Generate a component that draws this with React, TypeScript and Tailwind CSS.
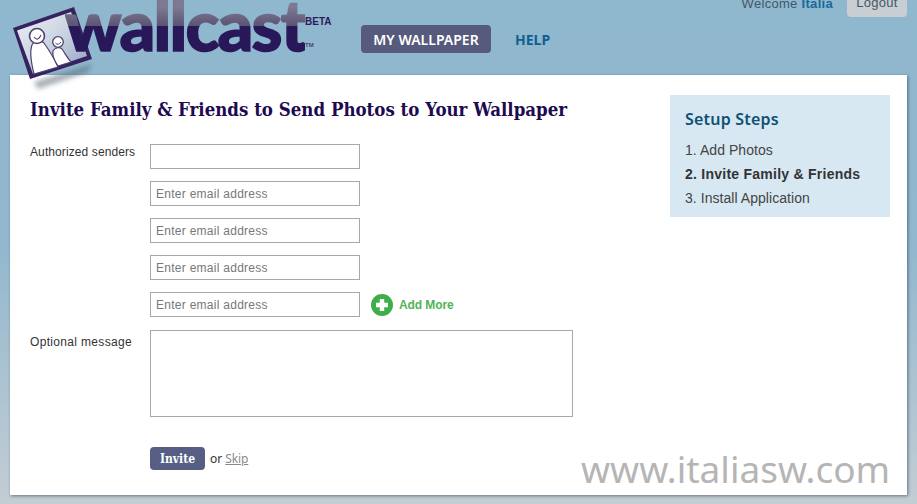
import React from "react";

function LogoFrame() {
  return (
    <svg width="100" height="95" viewBox="0 0 100 95" className="absolute left-0 top-0">
      <defs>
        <linearGradient id="pic" x1="0" y1="0" x2="1" y2="1">
          <stop offset="0" stopColor="#eef2f6" />
          <stop offset="0.55" stopColor="#c6d0e0" />
          <stop offset="1" stopColor="#8f9fbe" />
        </linearGradient>
        <filter id="blur" x="-30%" y="-30%" width="160%" height="160%">
          <feGaussianBlur stdDeviation="2.5" />
        </filter>
      </defs>
      <path d="M34 82 L92 64 L88 72 L38 89 Z" fill="#5b6a78" opacity="0.55" filter="url(#blur)" />
      <path d="M13 28 L74 7 L92 59 L30 79 Z" fill="#35225f" />
      <path d="M17 30.500 L71 12 L87 56 L33 74 Z" fill="url(#pic)" />
      <path d="M34 74 C31 62 30 50 32 45 C34 40 41 40 44 43 C49 50 54 58 58 67 Z" fill="#fff" stroke="#4d4270" strokeWidth="1.2" />
      <path d="M58 66 C54 60 52 55 53 51 C55 47 60 47 62 49 C65 53 67 58 71 62 Z" fill="#fff" stroke="#4d4270" strokeWidth="1.2" />
      <circle cx="37" cy="36" r="7.5" fill="#fff" stroke="#4d4270" strokeWidth="1.6" />
      <circle cx="58" cy="42" r="5.3" fill="#fff" stroke="#4d4270" strokeWidth="1.3" />
      <path d="M34 37 Q38 42 41 35" fill="none" stroke="#4d4270" strokeWidth="1.2" />
      <path d="M55.500 43 Q58 46 61 42" fill="none" stroke="#4d4270" strokeWidth="1" />
    </svg>
  );
}

function Field() {
  return (
    <input
      placeholder="Enter email address"
      className="block h-[25px] w-[210px] border border-[#a8a8a8] bg-white px-[5px] text-[12px] tracking-[0.27px] text-[#333] placeholder:text-[#777]"
    />
  );
}

export default function App() {
  return (
    <div className="relative h-[504px] w-[917px] overflow-hidden bg-gradient-to-b from-[#8fb7cd] via-[#93b8ce] to-[#c3cdd4] font-['Liberation_Sans',Arial,sans-serif]">
      <header className="relative z-10 flex h-[75px] items-start">
        <div className="relative h-[75px] w-[361px] shrink-0">
          <LogoFrame />
          <span className="absolute left-[65px] top-[-18px] bg-gradient-to-b from-[#7d7990] from-[30%] via-[#5a5373] via-[52%] to-[#28185a] to-[52%] bg-clip-text font-['Lato',sans-serif] text-[70px] font-black leading-[85px] tracking-[-1.8px] text-transparent [-webkit-text-stroke:1.5px_transparent]">
            wallcast
          </span>
          <span className="absolute left-[305px] top-[16px] text-[10px] font-bold leading-3 text-[#2c1b5c]">BETA</span>
          <span className="absolute left-[305px] top-[41px] text-[6px] font-bold leading-2 text-[#4a3f6e]">TM</span>
        </div>
        <nav className="mt-[25px] flex items-center font-['Noto_Sans',sans-serif] text-[14px] font-semibold">
          <a className="flex h-[28px] w-[130px] items-center justify-center rounded-[4px] bg-[#565a7c] text-white">MY WALLPAPER</a>
          <a className="ml-[24px] font-bold text-[#0f5f8f]">HELP</a>
        </nav>
        <div className="ml-auto mr-[10px] mt-[-11px] flex items-start text-[13px] tracking-[0.3px] text-[#44586a]">
          <span className="mt-[5px] mr-[14px]">
            Welcome <b className="text-[#1a6a99]">Italia</b>
          </span>
          <a className="flex h-[28px] w-[60px] items-center justify-center rounded-b-[4px] bg-[#c9ced2]">Logout</a>
        </div>
      </header>

      <main className="relative mx-[10px] flex h-[420px] w-[897px] justify-between bg-white pl-[20px] pr-[17px] pt-[20px] shadow-[1px_1px_3px_rgba(40,60,80,0.6)]">
        <section>
          <h1 className="font-['DejaVu_Serif_Condensed','DejaVu_Serif',serif] text-[18.500px] font-bold leading-[30px] text-[#200a4f]">
            Invite Family &amp; Friends to Send Photos to Your Wallpaper
          </h1>
          <div className="mt-[19px] flex">
            <label className="w-[120px] pt-[1px] text-[12px] leading-[14px] tracking-[0.1px] text-[#333]">Authorized senders</label>
            <div className="flex flex-col gap-[12px]">
              <input className="block h-[25px] w-[210px] border border-[#a8a8a8] bg-white" />
              <Field />
              <Field />
              <Field />
              <div className="flex items-center">
                <Field />
                <svg width="22" height="22" viewBox="0 0 22 22" className="ml-[11px]">
                  <circle cx="11" cy="11" r="11" fill="#3fae49" />
                  <path d="M11 5v12M5 11h12" stroke="#fff" strokeWidth="4.400" />
                </svg>
                <span className="ml-[6px] text-[12px] font-bold tracking-[-0.1px] text-[#4db556]">Add More</span>
              </div>
            </div>
          </div>
          <div className="mt-[13px] flex">
            <label className="w-[120px] pt-[5px] text-[12px] leading-[14px] tracking-[0.33px] text-[#333]">Optional message</label>
            <textarea className="block h-[87px] w-[423px] resize-none border border-[#a8a8a8] bg-white" />
          </div>
          <div className="ml-[120px] mt-[30px] flex items-center font-['Noto_Sans',sans-serif] text-[12px]">
            <button className="h-[23px] w-[55px] rounded-[4px] bg-[#565f83] font-['DejaVu_Serif_Condensed','DejaVu_Serif',serif] text-[12px] font-bold text-white">Invite</button>
            <span className="ml-[5px] text-[#333]">or</span>
            <a className="ml-[3px] tracking-[-0.1px] text-[#8a8a8a] underline">Skip</a>
          </div>
        </section>
        <aside className="h-[122px] w-[220px] bg-[#d7e8f3] px-[15px] pt-[12px]">
          <h2 className="font-['Noto_Sans',sans-serif] text-[16px] font-semibold leading-[24px] tracking-[0.2px] text-[#0f5273]">Setup Steps</h2>
          <ol className="mt-[7px] text-[14px] leading-[24px] tracking-[0.05px] text-[#444]">
            <li>1. Add Photos</li>
            <li className="font-bold tracking-[0.25px] text-[#333]">2. Invite Family &amp; Friends</li>
            <li>3. Install Application</li>
          </ol>
        </aside>
        <span className="absolute left-[571px] top-[369px] font-['Noto_Sans',sans-serif] text-[37px] leading-[50px] text-[#b5b5b5]">www.italiasw.com</span>
      </main>
    </div>
  );
}
